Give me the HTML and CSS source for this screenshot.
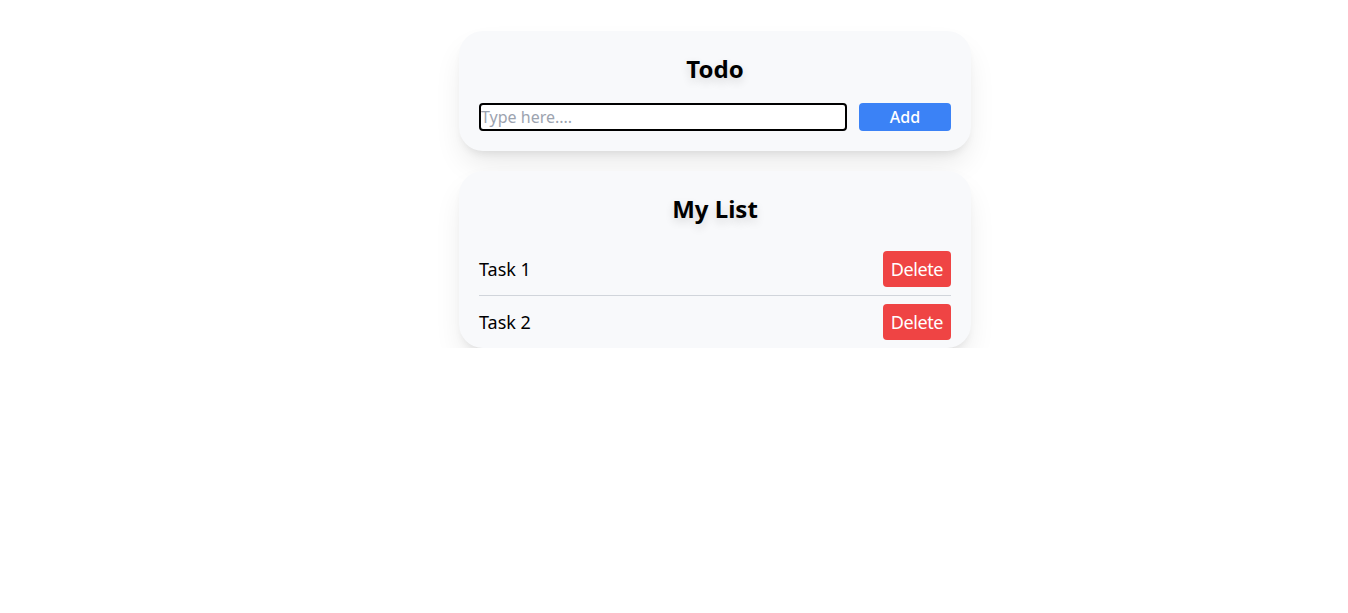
FILE: index.html
```html
<!DOCTYPE html>
<html lang="en">
<head>
<meta charset="utf-8">
<title>Todo</title>
<link rel="stylesheet" href="styles.css">
</head>
<body>
<main class="app">
  <section class="card">
    <h1 class="card-title">Todo</h1>
    <form class="add-form" onsubmit="return false">
      <input class="add-input" type="text" placeholder="Type here....">
      <button class="add-btn" type="submit">Add</button>
    </form>
  </section>
  <section class="card card-list">
    <h2 class="card-title">My List</h2>
    <ul class="task-list">
      <li class="task"><span class="task-name">Task 1</span><button class="del-btn">Delete</button></li>
      <li class="task"><span class="task-name">Task 2</span><button class="del-btn">Delete</button></li>
    </ul>
  </section>
</main>
</body>
</html>
```

FILE: styles.css
```css
* { box-sizing: border-box; }
html, body { margin: 0; padding: 0; background: #ffffff; }
body {
  font-family: "Noto Sans", "Open Sans", sans-serif;
  color: #000;
}
.app {
  width: 512px;
  margin: 31px 0 0 459px;
  display: flex;
  flex-direction: column;
  gap: 20px;
}
.card {
  background: #f8f9fb;
  border-radius: 24px;
  padding: 20px 20px 20px;
  box-shadow: 0 16px 30px -4px rgba(0,0,0,0.09), 0 6px 10px -4px rgba(0,0,0,0.09);
}
.card-list { padding-bottom: 0; }
.card-title {
  margin: 0 0 16px;
  text-align: center;
  font-size: 24px;
  line-height: 36px;
  font-weight: 700;
  text-shadow: 0 4px 10px rgba(0,0,0,0.14);
}
.add-form {
  display: flex;
  gap: 12px;
}
.add-input {
  flex: 1;
  height: 28px;
  border: 2px solid #000;
  border-radius: 4px;
  padding: 0;
  font-family: inherit;
  font-size: 16px;
  background: #fff;
  outline: none;
}
.add-input::placeholder { color: #9ca3af; }
.add-btn {
  width: 92px;
  height: 28px;
  border: none;
  border-radius: 4px;
  background: #3b82f6;
  color: #fff;
  font-family: inherit;
  font-size: 16px;
  font-weight: 500;
  padding: 0;
}
.task-list {
  list-style: none;
  margin: 0;
  padding: 0;
}
.task {
  display: flex;
  justify-content: space-between;
  align-items: center;
  padding: 8px 0;
}
.task + .task { border-top: 1px solid #d1d5db; }
.task-name { font-size: 18px; line-height: 28px; }
.del-btn {
  background: #ef4444;
  color: #fff;
  border: none;
  border-radius: 4px;
  font-family: inherit;
  font-size: 18px;
  line-height: 28px;
  padding: 4px 8px;
  letter-spacing: -0.4px;
}
```
